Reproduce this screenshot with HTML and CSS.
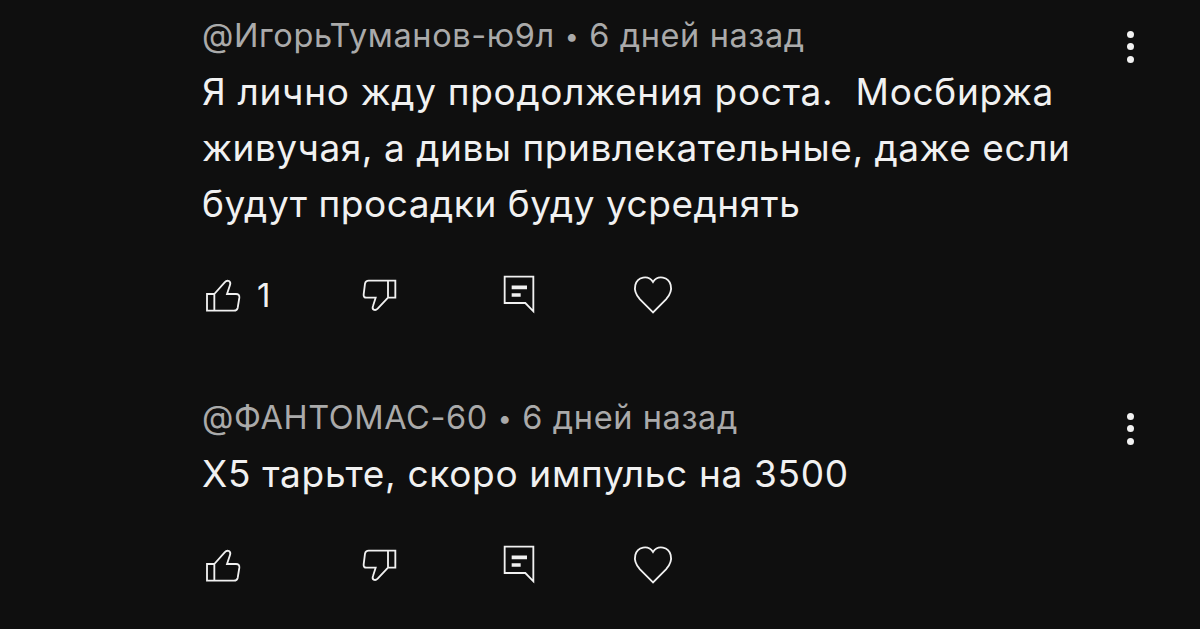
FILE: index.html
```html
<!DOCTYPE html>
<html lang="ru">

<head>
    <meta charset="UTF-8">
    <meta name="viewport" content="width=device-width, initial-scale=1.0">
    <title>Комментарии</title>
    <link rel="stylesheet" href="styles.css">
</head>

<body>
    <svg class="sprite">
        <symbol id="like" viewBox="0 0 180 180">
            <path d="M51 87H73V137H51ZM73 87L104 52Q110 45 117 48Q123 52 120 60L111 87H138Q149 87 148 98L143 129Q141 137 132 137H73" />
        </symbol>
        <symbol id="dislike" viewBox="0 0 180 180">
            <path d="M114 47H136V98H114ZM114 98L83 131Q77 137 71 134Q66 131 69 123L77 98H49Q40 98 41 88L45 56Q47 47 56 47H114" />
        </symbol>
        <symbol id="reply" viewBox="0 0 180 180">
            <path d="M44 35H130V139L106 114H44Z" />
            <path class="lines" d="M65 67H111M65 90H92" />
        </symbol>
        <symbol id="heart" viewBox="0 0 210 180">
            <path d="M99 142L60 103C46 88 43 72 46 60C52 36 84 28 99 51C114 28 146 36 152 60C155 72 152 88 138 103Z" />
        </symbol>
    </svg>

    <main class="comments">
        <article class="comment">
            <div class="content">
                <div class="meta">@ИгорьТуманов-ю9л <span class="dot">•</span> 6 дней назад</div>
                <p class="text">
                    <span class="line wide">Я лично жду продолжения роста.&nbsp; Мосбиржа</span>
                    <span class="line">живучая, а дивы привлекательные, даже если</span>
                    <span class="line">будут просадки буду усреднять</span>
                </p>
                <div class="actions">
                    <div class="action like"><svg><use href="#like" /></svg><span class="count">1</span></div>
                    <div class="action dislike"><svg><use href="#dislike" /></svg></div>
                    <div class="action reply"><svg><use href="#reply" /></svg></div>
                    <div class="action heart"><svg><use href="#heart" /></svg></div>
                </div>
            </div>
            <div class="menu"><i></i><i></i><i></i></div>
        </article>

        <article class="comment">
            <div class="content">
                <div class="meta">@ФАНТОМАС-60 <span class="dot">•</span> 6 дней назад</div>
                <p class="text">
                    <span class="line wide">Х5 тарьте, скоро импульс на 3500</span>
                </p>
                <div class="actions">
                    <div class="action like"><svg><use href="#like" /></svg></div>
                    <div class="action dislike"><svg><use href="#dislike" /></svg></div>
                    <div class="action reply"><svg><use href="#reply" /></svg></div>
                    <div class="action heart"><svg><use href="#heart" /></svg></div>
                </div>
            </div>
            <div class="menu"><i></i><i></i><i></i></div>
        </article>
    </main>
</body>

</html>
```

FILE: styles.css
```css
body {
    margin: 0;
    background-color: #0f0f0f;
    color: #f1f1f1;
    font-family: Inter, sans-serif;
}

.sprite {
    display: none;
}

.comments {
    display: flex;
    flex-direction: column;
    gap: 68px;
    padding: 11px 66px 0 202px;
}

.comment {
    display: flex;
    justify-content: space-between;
}

.meta {
    font-size: 32.5px;
    line-height: 50px;
    height: 50px;
    letter-spacing: 0.6px;
    color: #aaa;
    white-space: nowrap;
}

.dot {
    display: inline-block;
    width: 15px;
    font-size: 25px;
    line-height: 20px;
    text-align: center;
    vertical-align: 2px;
}

.text {
    margin: 3px 0 33px;
    font-size: 37px;
    line-height: 56px;
    letter-spacing: 0.54px;
    white-space: nowrap;
}

.line {
    display: block;
}

.wide {
    letter-spacing: 0.68px;
}

.actions {
    display: flex;
    margin-left: -12px;
    height: 60px;
}

.action {
    display: flex;
    align-items: center;
}

.action svg {
    width: 60px;
    height: 60px;
    fill: none;
    stroke: #f1f1f1;
    stroke-width: 5.5;
}

.lines {
    stroke-width: 11;
}

.like {
    width: 160px;
}

.dislike {
    width: 140px;
}

.reply {
    width: 130px;
}

.heart svg {
    width: 70px;
}

.count {
    margin-left: 7px;
    font-size: 33px;
}

.menu {
    display: flex;
    flex-direction: column;
    gap: 5.5px;
    padding-top: 19.5px;
}

.menu i {
    width: 7px;
    height: 7px;
    border-radius: 50%;
    background-color: #f1f1f1;
}
```
